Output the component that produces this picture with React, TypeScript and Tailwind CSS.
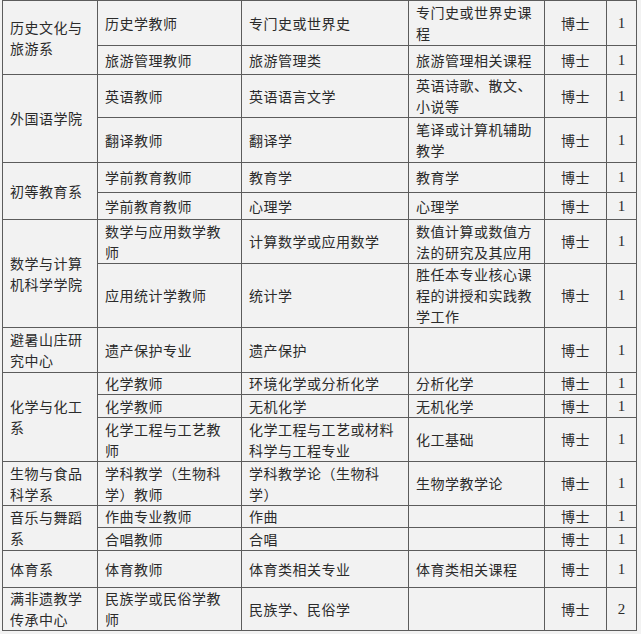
import React from "react";

interface Row {
  dept?: string;
  span?: number;
  post: string;
  major: string;
  course: string;
  degree: string;
  count: string;
}

const ROWS: Row[] = [
  { dept: "历史文化与\n旅游系", span: 2, post: "历史学教师", major: "专门史或世界史", course: "专门史或世界史课\n程", degree: "博士", count: "1" },
  { post: "旅游管理教师", major: "旅游管理类", course: "旅游管理相关课程", degree: "博士", count: "1" },
  { dept: "外国语学院", span: 2, post: "英语教师", major: "英语语言文学", course: "英语诗歌、散文、\n小说等", degree: "博士", count: "1" },
  { post: "翻译教师", major: "翻译学", course: "笔译或计算机辅助\n教学", degree: "博士", count: "1" },
  { dept: "初等教育系", span: 2, post: "学前教育教师", major: "教育学", course: "教育学", degree: "博士", count: "1" },
  { post: "学前教育教师", major: "心理学", course: "心理学", degree: "博士", count: "1" },
  { dept: "数学与计算\n机科学学院", span: 2, post: "数学与应用数学教\n师", major: "计算数学或应用数学", course: "数值计算或数值方\n法的研究及其应用", degree: "博士", count: "1" },
  { post: "应用统计学教师", major: "统计学", course: "胜任本专业核心课\n程的讲授和实践教\n学工作", degree: "博士", count: "1" },
  { dept: "避暑山庄研\n究中心", span: 1, post: "遗产保护专业", major: "遗产保护", course: "", degree: "博士", count: "1" },
  { dept: "化学与化工\n系", span: 3, post: "化学教师", major: "环境化学或分析化学", course: "分析化学", degree: "博士", count: "1" },
  { post: "化学教师", major: "无机化学", course: "无机化学", degree: "博士", count: "1" },
  { post: "化学工程与工艺教\n师", major: "化学工程与工艺或材料\n科学与工程专业", course: "化工基础", degree: "博士", count: "1" },
  { dept: "生物与食品\n科学系", span: 1, post: "学科教学（生物科\n学）教师", major: "学科教学论（生物科\n学）", course: "生物学教学论", degree: "博士", count: "1" },
  { dept: "音乐与舞蹈\n系", span: 2, post: "作曲专业教师", major: "作曲", course: "", degree: "博士", count: "1" },
  { post: "合唱教师", major: "合唱", course: "", degree: "博士", count: "1" },
  { dept: "体育系", span: 1, post: "体育教师", major: "体育类相关专业", course: "体育类相关课程", degree: "博士", count: "1" },
  { dept: "满非遗教学\n传承中心", span: 1, post: "民族学或民俗学教\n师", major: "民族学、民俗学", course: "", degree: "博士", count: "2" },
];

const cell = "bg-[#f2f2f2] flex items-center whitespace-pre-line";
const text = "px-[7px] text-[14px] leading-[21px] tracking-[0.5px]";

export default function App() {
  return (
    <div className="min-h-[634px] bg-[#f2f2f2] text-[#2b2b2b] font-['Noto_Sans_CJK_SC','Noto_Sans',sans-serif]">
      <div className="ml-[2px] w-fit grid grid-cols-[94px_143px_166px_135px_61px_29px] grid-rows-[44px_28px_42px_44px_29px_26px_43px_63px_44px_21px_22px_43px_43px_21px_22px_36px_42px] gap-px p-px bg-[#5c5c5c]">
        {ROWS.map((r, i) => (
          <React.Fragment key={i}>
            {r.dept !== undefined && (
              <div className={`${cell} ${text} ${r.span === 3 ? "row-span-3" : r.span === 2 ? "row-span-2" : ""}`}>
                {r.dept}
              </div>
            )}
            <div className={`${cell} ${text}`}>{r.post}</div>
            <div className={`${cell} ${text}`}>{r.major}</div>
            <div className={`${cell} ${text}`}>{r.course}</div>
            <div className={`${cell} justify-center text-[14px] tracking-[0.5px]`}>{r.degree}</div>
            <div className={`${cell} justify-center text-[15px] font-['Liberation_Serif',serif]`}>{r.count}</div>
          </React.Fragment>
        ))}
      </div>
    </div>
  );
}
